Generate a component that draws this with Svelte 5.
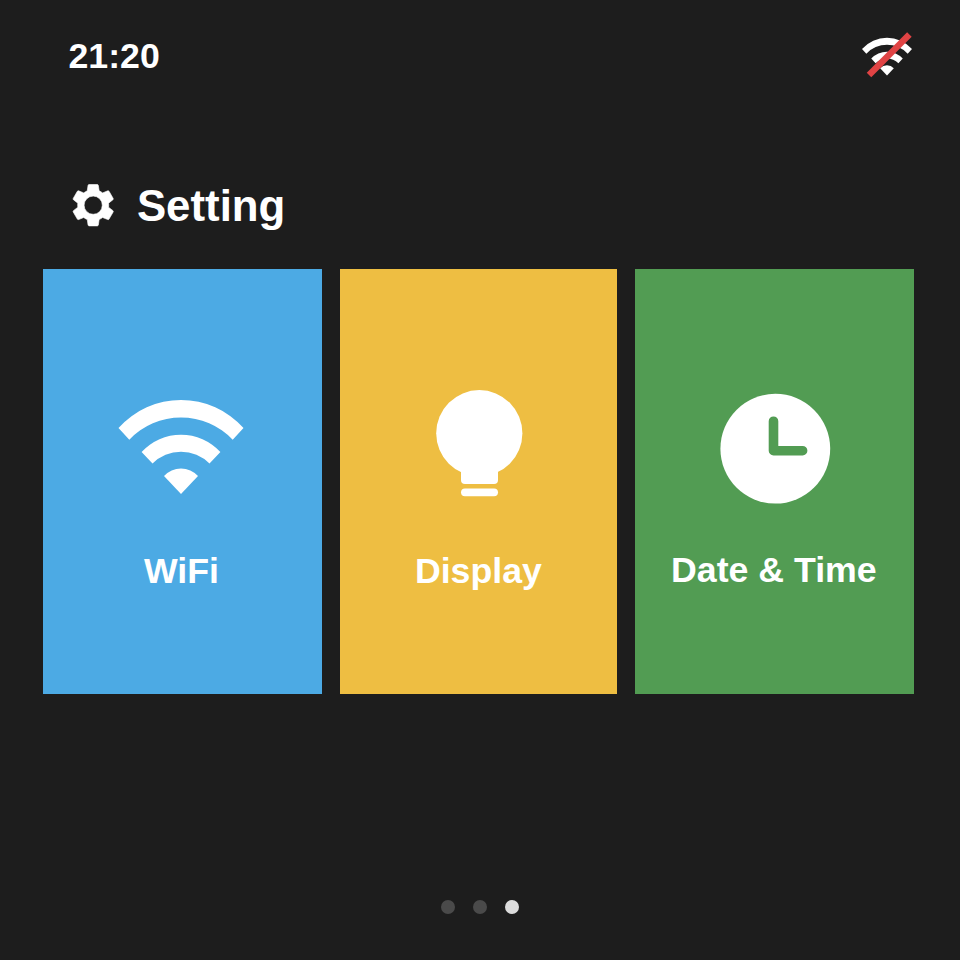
<script>
  const cards = [
    { id: 'wifi', label: 'WiFi' },
    { id: 'display', label: 'Display' },
    { id: 'clock', label: 'Date & Time' }
  ];
  const pages = [0, 1, 2];
  let current = $state(2);
</script>

{#snippet wifi()}
  <path d="M0 28A83.8 83.8 0 0 1 125 28L114.2 39.8A71 71 0 0 0 10.8 39.8Z" />
  <path d="M23.1 52A53.5 53.5 0 0 1 101.9 52L91 63.6A40 40 0 0 0 34 63.6Z" />
  <path d="M45.5 76A23 23 0 0 1 79.5 76L62.5 94Z" />
{/snippet}

<main class="screen">
  <header class="status">
    <time class="time">21:20</time>
    <svg class="offline" viewBox="0 0 56 52" fill="#fff" aria-label="WiFi off">
      <g transform="translate(4 9.8) scale(.4)">{@render wifi()}</g>
      <path d="M11 47L51.4 6.6" stroke="#e04344" stroke-width="6.4" />
    </svg>
  </header>

  <h1 class="title">
    <svg class="gear" viewBox="0 0 24 24" fill="#fff" aria-hidden="true">
      <path fill-rule="evenodd" stroke="#fff" stroke-width=".3" transform="translate(.18 .18) scale(.985)" d="M19.43 12.98c.04-.32.07-.64.07-.98s-.03-.66-.07-.98l2.11-1.65c.19-.15.24-.42.12-.64l-2-3.46c-.12-.22-.39-.3-.61-.22l-2.49 1c-.52-.4-1.08-.73-1.69-.98l-.38-2.65C14.46 2.18 14.25 2 14 2h-4c-.25 0-.46.18-.49.42l-.38 2.65c-.61.25-1.17.59-1.69.98l-2.49-1c-.23-.09-.49 0-.61.22l-2 3.46c-.13.22-.07.49.12.64l2.11 1.65c-.04.32-.07.65-.07.98s.03.66.07.98l-2.11 1.65c-.19.15-.24.42-.12.64l2 3.46c.12.22.39.3.61.22l2.49-1c.52.4 1.08.73 1.69.98l.38 2.65c.03.24.24.42.49.42h4c.25 0 .46-.18.49-.42l.38-2.65c.61-.25 1.17-.59 1.69-.98l2.49 1c.23.09.49 0 .61-.22l2-3.46c.12-.22.07-.49-.12-.64zM12 16.4a4.4 4.4 0 1 1 0-8.8a4.4 4.4 0 0 1 0 8.8z" />
    </svg>
    <span>Setting</span>
  </h1>

  <nav class="cards">
    {#each cards as card (card.id)}
      <button class="card {card.id}">
        <svg class="icon" viewBox="0 0 140 120" fill="#fff" aria-hidden="true">
          {#if card.id === 'wifi'}
            <g transform="translate(6.5 15)">{@render wifi()}</g>
          {:else if card.id === 'display'}
            <circle cx="70.3" cy="48.2" r="43.1" />
            <path d="M52 80H89V95Q89 99 85 99H56Q52 99 52 95Z" />
            <rect x="52" y="103.4" width="37" height="7.8" rx="3.9" />
          {:else}
            <circle cx="70.3" cy="63.7" r="54.9" />
            <path d="M68.5 36.2V65.7H97.6" fill="none" stroke="#529c53" stroke-width="9.6" stroke-linecap="round" stroke-linejoin="round" />
          {/if}
        </svg>
        <span class="label">{card.label}</span>
      </button>
    {/each}
  </nav>

  <footer class="dots">
    {#each pages as page (page)}
      <button class="dot" class:active={page === current} aria-label="Page {page + 1}" onclick={() => (current = page)}></button>
    {/each}
  </footer>
</main>

<style>
  :global(body) {
    background: #1d1d1d;
  }
  .screen {
    box-sizing: border-box;
    width: 960px;
    height: 960px;
    display: flex;
    flex-direction: column;
    background: #1d1d1d;
    color: #fff;
    font-family: "Liberation Sans", Arial, sans-serif;
    font-weight: 700;
    overflow: hidden;
  }
  .status {
    display: flex;
    justify-content: space-between;
    align-items: flex-start;
    height: 152px;
    padding: 28px 44px 0 68.5px;
  }
  .time {
    margin-top: 8px;
    font-size: 35.7px;
    line-height: 40px;
  }
  .offline {
    width: 56px;
    height: 52px;
    margin-right: 2px;
  }
  .title {
    display: flex;
    align-items: center;
    gap: 18.5px;
    height: 51px;
    margin: 0 0 38px 68px;
    font-size: 43.8px;
    line-height: 50px;
  }
  .gear {
    width: 50.4px;
    height: 50.4px;
  }
  .cards {
    display: grid;
    grid-template-columns: 279px 277px 279px;
    gap: 18px;
    margin-left: 43.4px;
    height: 425px;
  }
  .card {
    display: flex;
    flex-direction: column;
    align-items: center;
    border: 0;
    padding: 115.5px 0 0;
    color: inherit;
    font: inherit;
  }
  .wifi {
    background: #4caae4;
  }
  .wifi .icon {
    margin-left: -2px;
  }
  .wifi .label {
    margin-left: -3px;
  }
  .display {
    background: #eebe42;
  }
  .display .label {
    margin-left: -1px;
  }
  .clock {
    background: #529c53;
  }
  .clock .label {
    margin-top: 45px;
    margin-left: -2px;
  }
  .icon {
    flex: none;
    width: 140px;
    height: 120px;
  }
  .label {
    margin-top: 46px;
    font-size: 35.7px;
    line-height: 40px;
    white-space: nowrap;
  }
  .dots {
    display: flex;
    justify-content: center;
    gap: 18px;
    margin-top: 206px;
  }
  .dot {
    width: 14px;
    height: 14px;
    padding: 0;
    border: 0;
    border-radius: 50%;
    background: #4a4a4a;
  }
  .dot.active {
    background: #dcdcdc;
  }
</style>
